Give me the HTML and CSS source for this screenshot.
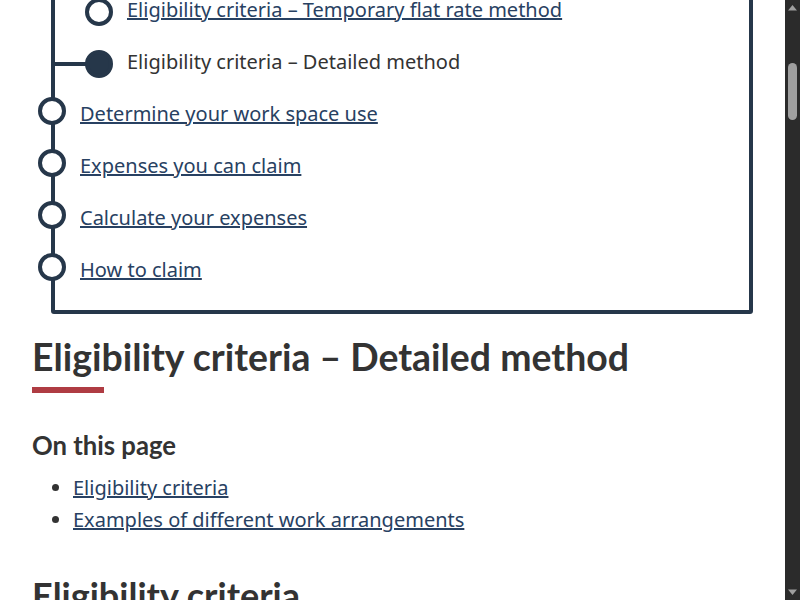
FILE: index.html
```html
<!DOCTYPE html>
<html lang="en">
<head>
<meta charset="utf-8">
<title>Eligibility criteria – Detailed method - Canada.ca</title>
<link rel="stylesheet" href="styles.css">
</head>
<body>
<div class="window">
<div class="viewport" id="viewport">
<div class="page">
  <header class="site-header">
    <div class="container header-inner">
      <span class="brand">Government of Canada</span>
      <span class="brand-fr">Gouvernement du Canada</span>
    </div>
  </header>
  <main class="container">
    <nav class="breadcrumb">
      <a href="#">Canada.ca</a> › <a href="#">Taxes</a> › <a href="#">Income tax</a> › <a href="#">Personal income tax</a>
    </nav>
    <p class="lead">Find out if you can claim home office expenses, which method to use, and how to calculate and claim your expenses.</p>

    <nav class="steps" aria-label="Home office expenses for employees">
      <p class="steps-title">Home office expenses for employees</p>
      <ol class="steps-list">
        <li class="step"><div class="row"><span class="dot"></span><a href="#">Overview</a></div></li>
        <li class="step">
          <div class="row"><span class="dot"></span><a href="#">Eligibility criteria</a></div>
          <ol class="substeps">
            <li class="substep"><div class="row"><span class="dot"></span><a href="#">Eligibility criteria – Temporary flat rate method</a></div></li>
            <li class="substep current"><div class="row"><span class="dot"></span><span>Eligibility criteria – Detailed method</span></div></li>
          </ol>
        </li>
        <li class="step"><div class="row"><span class="dot"></span><a href="#">Determine your work space use</a></div></li>
        <li class="step"><div class="row"><span class="dot"></span><a href="#">Expenses you can claim</a></div></li>
        <li class="step"><div class="row"><span class="dot"></span><a href="#">Calculate your expenses</a></div></li>
        <li class="step"><div class="row"><span class="dot"></span><a href="#">How to claim</a></div></li>
      </ol>
    </nav>

    <h1 class="page-title">Eligibility criteria – Detailed method</h1>

    <h2 class="toc-title">On this page</h2>
    <ul class="toc">
      <li><a href="#criteria">Eligibility criteria</a></li>
      <li><a href="#examples">Examples of different work arrangements</a></li>
    </ul>

    <h2 class="section-title" id="criteria">Eligibility criteria</h2>
    <p>You can claim home office expenses using the detailed method if you meet all of the following conditions:</p>
    <ul class="plain">
      <li>You were an employee and worked from home in 2021 due to the COVID-19 pandemic or your employer required you to work from home</li>
      <li>You were required to pay for expenses related to the work space in your home</li>
      <li>Your employer completed and signed Form T2200S or Form T2200</li>
    </ul>

    <h2 class="section-title" id="examples">Examples of different work arrangements</h2>
    <p>The following examples show how the eligibility criteria apply to different work arrangements.</p>
  </main>
</div>
</div>
<div class="scrollbar" aria-hidden="true">
  <div class="sb-button">
    <svg width="15" height="15" viewBox="0 0 15 15"><path d="M3 10.5 L12 10.5 L7.5 5 Z" fill="#9e9e9e"/></svg>
  </div>
  <div class="sb-track"><div class="sb-thumb"></div></div>
  <div class="sb-button">
    <svg width="15" height="15" viewBox="0 0 15 15"><path d="M3 4.5 L12 4.5 L7.5 10 Z" fill="#9e9e9e"/></svg>
  </div>
</div>
</div>
<script src="script.js"></script>
</body>
</html>
```

FILE: styles.css
```css
html,
body {
  height: 100%;
  overflow: hidden;
}

html {
  background: #fff;
}

body {
  margin: 0;
  background: #fff;
  color: #333;
  font-family: "Noto Sans", "DejaVu Sans", sans-serif;
  font-size: 20px;
  line-height: 32px;
}

.window {
  display: flex;
  height: 100%;
}

.viewport {
  flex: 1;
  min-width: 0;
  height: 100%;
  overflow: hidden;
  background: #fff;
}

/* Scrollbar drawn as part of the window chrome */
.scrollbar {
  width: 15px;
  flex: none;
  display: flex;
  flex-direction: column;
  background: #2b2b2b;
}

.sb-button {
  height: 15px;
  flex: none;
}

.sb-button svg {
  display: block;
}

.sb-track {
  flex: 1;
  padding: 48px 3px 0;
}

.sb-thumb {
  height: 57px;
  border-radius: 5px;
  background: #9f9f9f;
}

a {
  color: #284162;
  text-decoration: underline;
}

.page {
  min-height: 6000px;
}

.container {
  padding: 0 32px;
}

.site-header {
  background: #26374a;
  color: #fff;
}

.header-inner {
  display: flex;
  flex-direction: column;
  padding-top: 14px;
  padding-bottom: 14px;
  font-family: "Lato", sans-serif;
  font-weight: 700;
  line-height: 26px;
}

.brand-fr {
  font-weight: 400;
}

.breadcrumb {
  padding: 16px 0;
  font-size: 18px;
}

.lead {
  margin: 0 0 24px;
}

/* Steps map */
.steps {
  margin: 0 0 0 19px;
  border: 4px solid #26374a;
  border-radius: 3px;
  padding: 0 0 14px;
}

.steps-title {
  margin: 0;
  padding: 18px 24px 12px;
  font-family: "Lato", sans-serif;
  font-weight: 700;
  font-size: 24px;
  line-height: 32px;
  color: #333;
}

.steps-list,
.substeps {
  list-style: none;
  margin: 0;
  padding: 0;
}

.row {
  position: relative;
  padding: 10px 0 10px 25px;
}

.substep .row {
  padding-left: 72px;
}

.dot {
  position: absolute;
  left: -17px;
  top: 9px;
  width: 28px;
  height: 28px;
  box-sizing: border-box;
  border: 4px solid #26374a;
  border-radius: 50%;
  background: #fff;
}

.substep .dot {
  left: 30px;
  top: 14px;
}

.current .dot {
  background: #26374a;
}

.current .row::before {
  content: "";
  position: absolute;
  left: 0;
  top: 26px;
  width: 32px;
  height: 4px;
  background: #26374a;
}

/* Headings */
.page-title {
  margin: 22px 0 38px;
  font-family: "Lato", sans-serif;
  font-weight: 700;
  font-size: 37.4px;
  line-height: 1.1;
  color: #333;
}

.page-title::after {
  content: "";
  display: block;
  width: 72px;
  height: 6px;
  margin-top: 10px;
  background: #af3c43;
}

.toc-title {
  margin: 0 0 13px;
  font-family: "Lato", sans-serif;
  font-weight: 700;
  font-size: 25.7px;
  line-height: 1.1;
  color: #333;
}

.toc {
  margin: 0 0 40px;
  padding-left: 41px;
}

.section-title {
  margin: 0 0 20px;
  font-family: "Lato", sans-serif;
  font-weight: 700;
  font-size: 36px;
  line-height: 1.1;
  color: #333;
}

.plain {
  padding-left: 40px;
  margin: 0 0 38px;
}
```

FILE: script.js
```js
function alignView() {
  var vp = document.getElementById('viewport');
  var cur = document.querySelector('.substep.current .row');
  if (!vp || !cur) return;
  var y = cur.getBoundingClientRect().top - vp.getBoundingClientRect().top + vp.scrollTop - 36;
  vp.scrollTop = Math.round(y);
}
alignView();
window.addEventListener('load', alignView);
```
